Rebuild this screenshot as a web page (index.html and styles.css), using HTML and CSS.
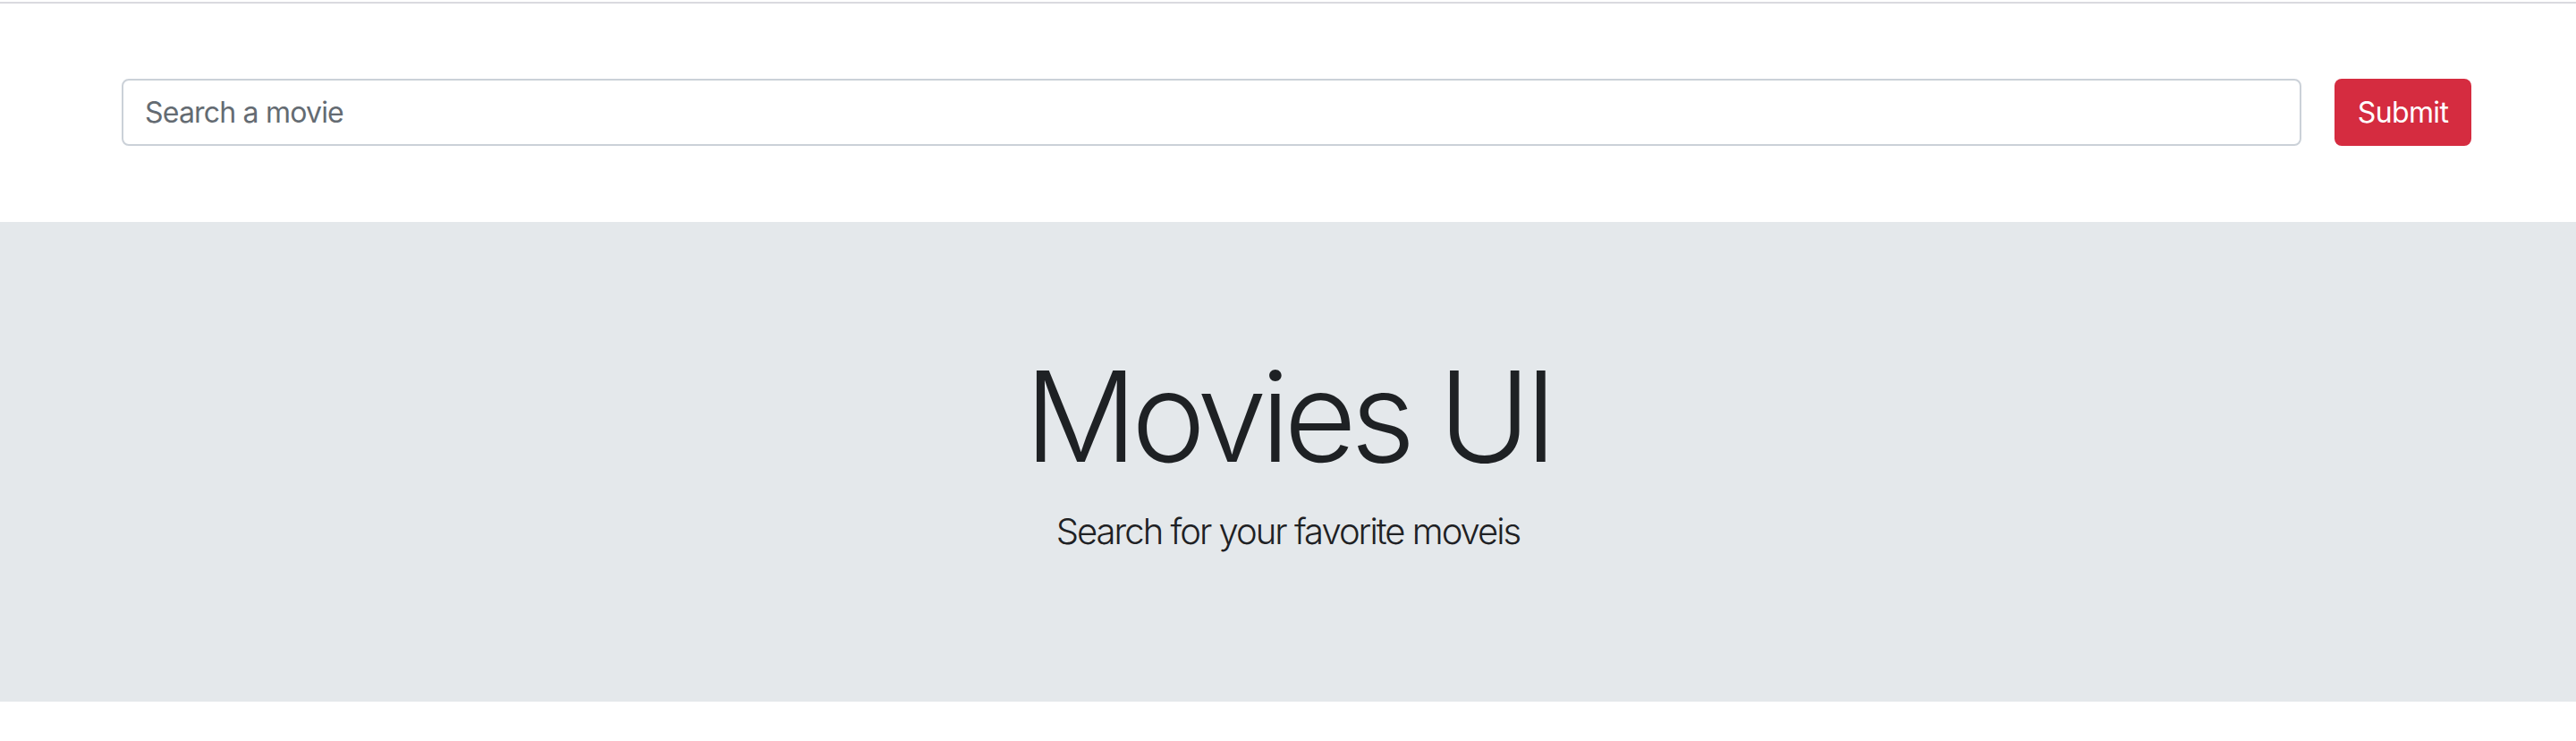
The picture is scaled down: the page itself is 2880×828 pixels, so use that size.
FILE: index.html
```html
<!DOCTYPE html>
<html lang="en">
<head>
<meta charset="utf-8">
<title>Movies UI</title>
<link rel="stylesheet" href="styles.css">
</head>
<body>
<div class="topline"></div>
<form class="search-row">
  <input class="search-input" type="text" placeholder="Search a movie">
  <button class="btn-submit" type="button">Submit</button>
</form>
<section class="jumbotron">
  <h1 class="title">Movies UI</h1>
  <p class="lead">Search for your favorite moveis</p>
</section>
</body>
</html>
```
FILE: styles.css
```css
html, body {
  margin: 0;
  padding: 0;
  background: #ffffff;
}
body {
  font-family: Inter, "Noto Sans", "Liberation Sans", sans-serif;
  color: #1f2225;
}
.topline {
  height: 2px;
  margin-top: 2px;
  background: #dadadf;
}
.search-row {
  display: flex;
  align-items: center;
  gap: 37px;
  padding: 84px 117px 85px 136px;
  margin: 0;
}
.search-input {
  flex: 1;
  box-sizing: border-box;
  height: 75px;
  border: 2px solid #cbd1d8;
  border-radius: 8px;
  padding: 0 24px;
  font-family: inherit;
  font-size: 32px;
  letter-spacing: -0.025em;
  color: #495057;
  background: #fff;
  outline: none;
}
.search-input::placeholder {
  color: #646b72;
}
.btn-submit {
  box-sizing: border-box;
  width: 153px;
  height: 75px;
  border: none;
  border-radius: 8px;
  background: #d52c40;
  color: #ffffff;
  font-family: inherit;
  font-size: 32px;
  letter-spacing: -0.02em;
  padding: 0;
}
.jumbotron {
  background: #e4e8eb;
  padding: 133px 64px 160px;
  text-align: center;
}
.title {
  margin: 0 0 15px;
  font-size: 140px;
  font-weight: 300;
  line-height: 1.2;
  letter-spacing: -0.048em;
  color: #1e2124;
}
.lead {
  margin: 0;
  font-size: 40px;
  font-weight: 300;
  line-height: 1.5;
  letter-spacing: -0.05em;
  color: #1e2124;
}
```
